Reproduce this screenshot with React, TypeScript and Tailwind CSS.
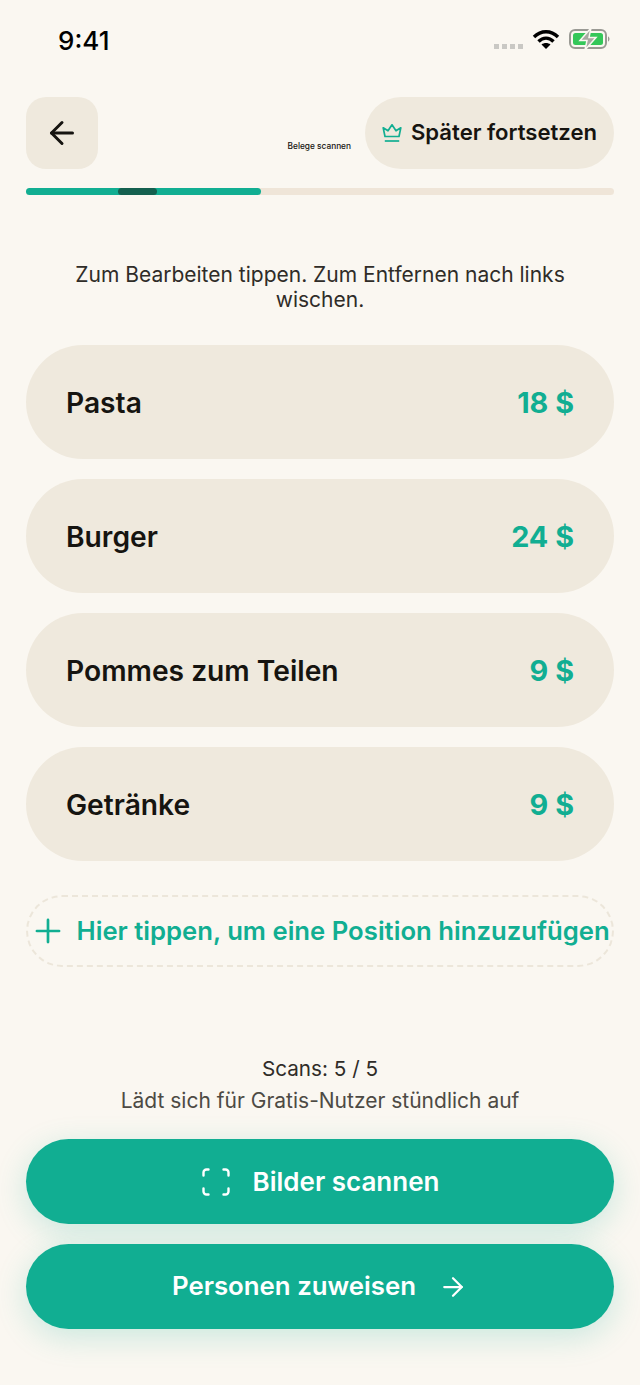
import { ArrowLeft, ArrowRight, Plus } from "lucide-react";

const items = [
  { name: "Pasta", price: "18 $" },
  { name: "Burger", price: "24 $" },
  { name: "Pommes zum Teilen", price: "9 $" },
  { name: "Getränke", price: "9 $" },
];

function Wifi() {
  return (
    <svg width="28" height="20" viewBox="0 0 28 20" fill="none">
      <path d="M2 8C9 1 19 1 26 8" stroke="#000" strokeWidth="3.4" />
      <path d="M6.5 12.5C11 8 17 8 21.5 12.5" stroke="#000" strokeWidth="3.4" />
      <path d="M14 20L9.5 15.5C12 13.5 16 13.5 18.5 15.5Z" fill="#000" />
    </svg>
  );
}

function Battery() {
  return (
    <svg width="42" height="22" viewBox="0 0 42 22" fill="none">
      <rect x="1" y="2" width="36" height="18" rx="5" stroke="#9a9a94" strokeWidth="2" />
      <rect x="4" y="5" width="30" height="12" rx="2.5" fill="#34c759" />
      <path d="M39 8.5C41 9 41 13 39 13.5Z" fill="#9a9a94" />
      <path d="M22 0L11 12.5H18L16 22L27 9.5H20Z" fill="#a8a8a2" stroke="#faf7f1" strokeWidth="1.5" />
    </svg>
  );
}

function Crown() {
  return (
    <svg width="20" height="20" viewBox="0 0 20 20" fill="none" stroke="#11ae92" strokeWidth="1.7">
      <path d="M3 13.5L1.2 4.8L6 7.8L10 1.8L14 7.8L18.8 4.8L17 13.5Z" strokeLinejoin="round" />
      <path d="M2.8 18H17.2" />
    </svg>
  );
}

function ScanFrame() {
  return (
    <svg width="28" height="28" viewBox="0 0 28 28" fill="none" stroke="#fff" strokeWidth="2.4" strokeLinecap="round">
      <path d="M1.5 7.5V4.5A3 3 0 0 1 4.5 1.5H6.5" />
      <path d="M21.5 1.5H23.5A3 3 0 0 1 26.5 4.5V7.5" />
      <path d="M1.5 20.5V23.5A3 3 0 0 0 4.5 26.5H6.5" />
      <path d="M21.5 26.5H23.5A3 3 0 0 0 26.5 23.5V20.5" />
    </svg>
  );
}

export default function App() {
  return (
    <div className="relative h-[1385px] w-[640px] overflow-hidden bg-[#faf7f1] font-['Inter',sans-serif] text-[#161410]">
      <div className="flex h-[97px] items-start justify-between pl-[58px] pr-[29px] pt-[25px]">
        <span className="text-[26px] leading-[32px] font-medium text-black">9:41</span>
        <div className="flex items-center pt-[3px]">
          <div className="mt-[15px] mr-[9px] flex gap-[3px]">
            <span className="h-[5px] w-[5px] bg-[#c9c8c4]" />
            <span className="h-[5px] w-[5px] bg-[#c9c8c4]" />
            <span className="h-[5px] w-[5px] bg-[#c9c8c4]" />
            <span className="h-[5px] w-[5px] bg-[#c9c8c4]" />
          </div>
          <Wifi />
          <div className="ml-[9px]">
            <Battery />
          </div>
        </div>
      </div>

      <div className="mx-[26px] flex h-[72px] items-center justify-between">
        <button className="flex h-[72px] w-[72px] items-center justify-center rounded-[20px] bg-[#efe9dd]">
          <ArrowLeft size={36} strokeWidth={2} color="#161410" />
        </button>
        <div className="flex items-center">
          <span className="mt-[26px] mr-[14px] text-[8.3px] leading-[10px] font-medium">Belege scannen</span>
          <button className="flex h-[72px] w-[249px] items-center gap-[9px] rounded-full bg-[#efe9dd] pl-[17px]">
            <Crown />
            <span className="text-[22.1px] font-semibold">Später fortsetzen</span>
          </button>
        </div>
      </div>

      <div className="relative mx-[26px] mt-[19px] h-[7px] rounded-full bg-[#efe5d8]">
        <div className="h-full w-[235px] rounded-full bg-[#11ae92]" />
        <div className="absolute top-0 left-[92px] h-full w-[39px] rounded-full bg-[#14604f]" />
      </div>

      <p className="mx-[50px] mt-[67px] text-center text-[21px] leading-[25px] text-[#2f2c28]">
        Zum Bearbeiten tippen. Zum Entfernen nach links wischen.
      </p>

      <div className="mx-[26px] mt-[33px] flex flex-col gap-[20px]">
        {items.map((item) => (
          <div
            key={item.name}
            className="flex h-[114px] items-center justify-between rounded-[57px] bg-[#efe9dd] px-[40px] pt-[2px] text-[28.2px] font-semibold"
          >
            <span>{item.name}</span>
            <span className="text-[28.8px] font-bold text-[#11ae92]">{item.price}</span>
          </div>
        ))}
      </div>

      <div className="mx-[26px] mt-[34px] flex h-[72px] items-center gap-[10px] rounded-[36px] border-2 border-dashed border-[#ece6da] pl-[0.5px] text-[#11ae92]">
        <Plus size={38} strokeWidth={1.7} />
        <span className="text-[25.7px] font-semibold whitespace-nowrap">Hier tippen, um eine Position hinzuzufügen</span>
      </div>

      <div className="mt-[86px] text-center leading-[32px]">
        <p className="text-[20.7px] text-[#2f2c28]">Scans: 5 / 5</p>
        <p className="text-[21px] text-[#4d4a44]">Lädt sich für Gratis-Nutzer stündlich auf</p>
      </div>

      <div className="mx-[26px] mt-[22px] flex flex-col gap-[20px]">
        <button className="flex h-[85px] items-center justify-center gap-[23px] rounded-full bg-[#11ae92] pl-[1px] text-[26px] font-semibold text-white shadow-[0_8px_32px_rgba(16,176,148,0.2)]">
          <ScanFrame />
          <span>Bilder scannen</span>
        </button>
        <button className="flex h-[85px] items-center justify-center gap-[22px] rounded-full bg-[#11ae92] text-[25.8px] font-semibold text-white shadow-[0_8px_32px_rgba(16,176,148,0.2)]">
          <span>Personen zuweisen</span>
          <ArrowRight size={30} strokeWidth={1.8} />
        </button>
      </div>
    </div>
  );
}
